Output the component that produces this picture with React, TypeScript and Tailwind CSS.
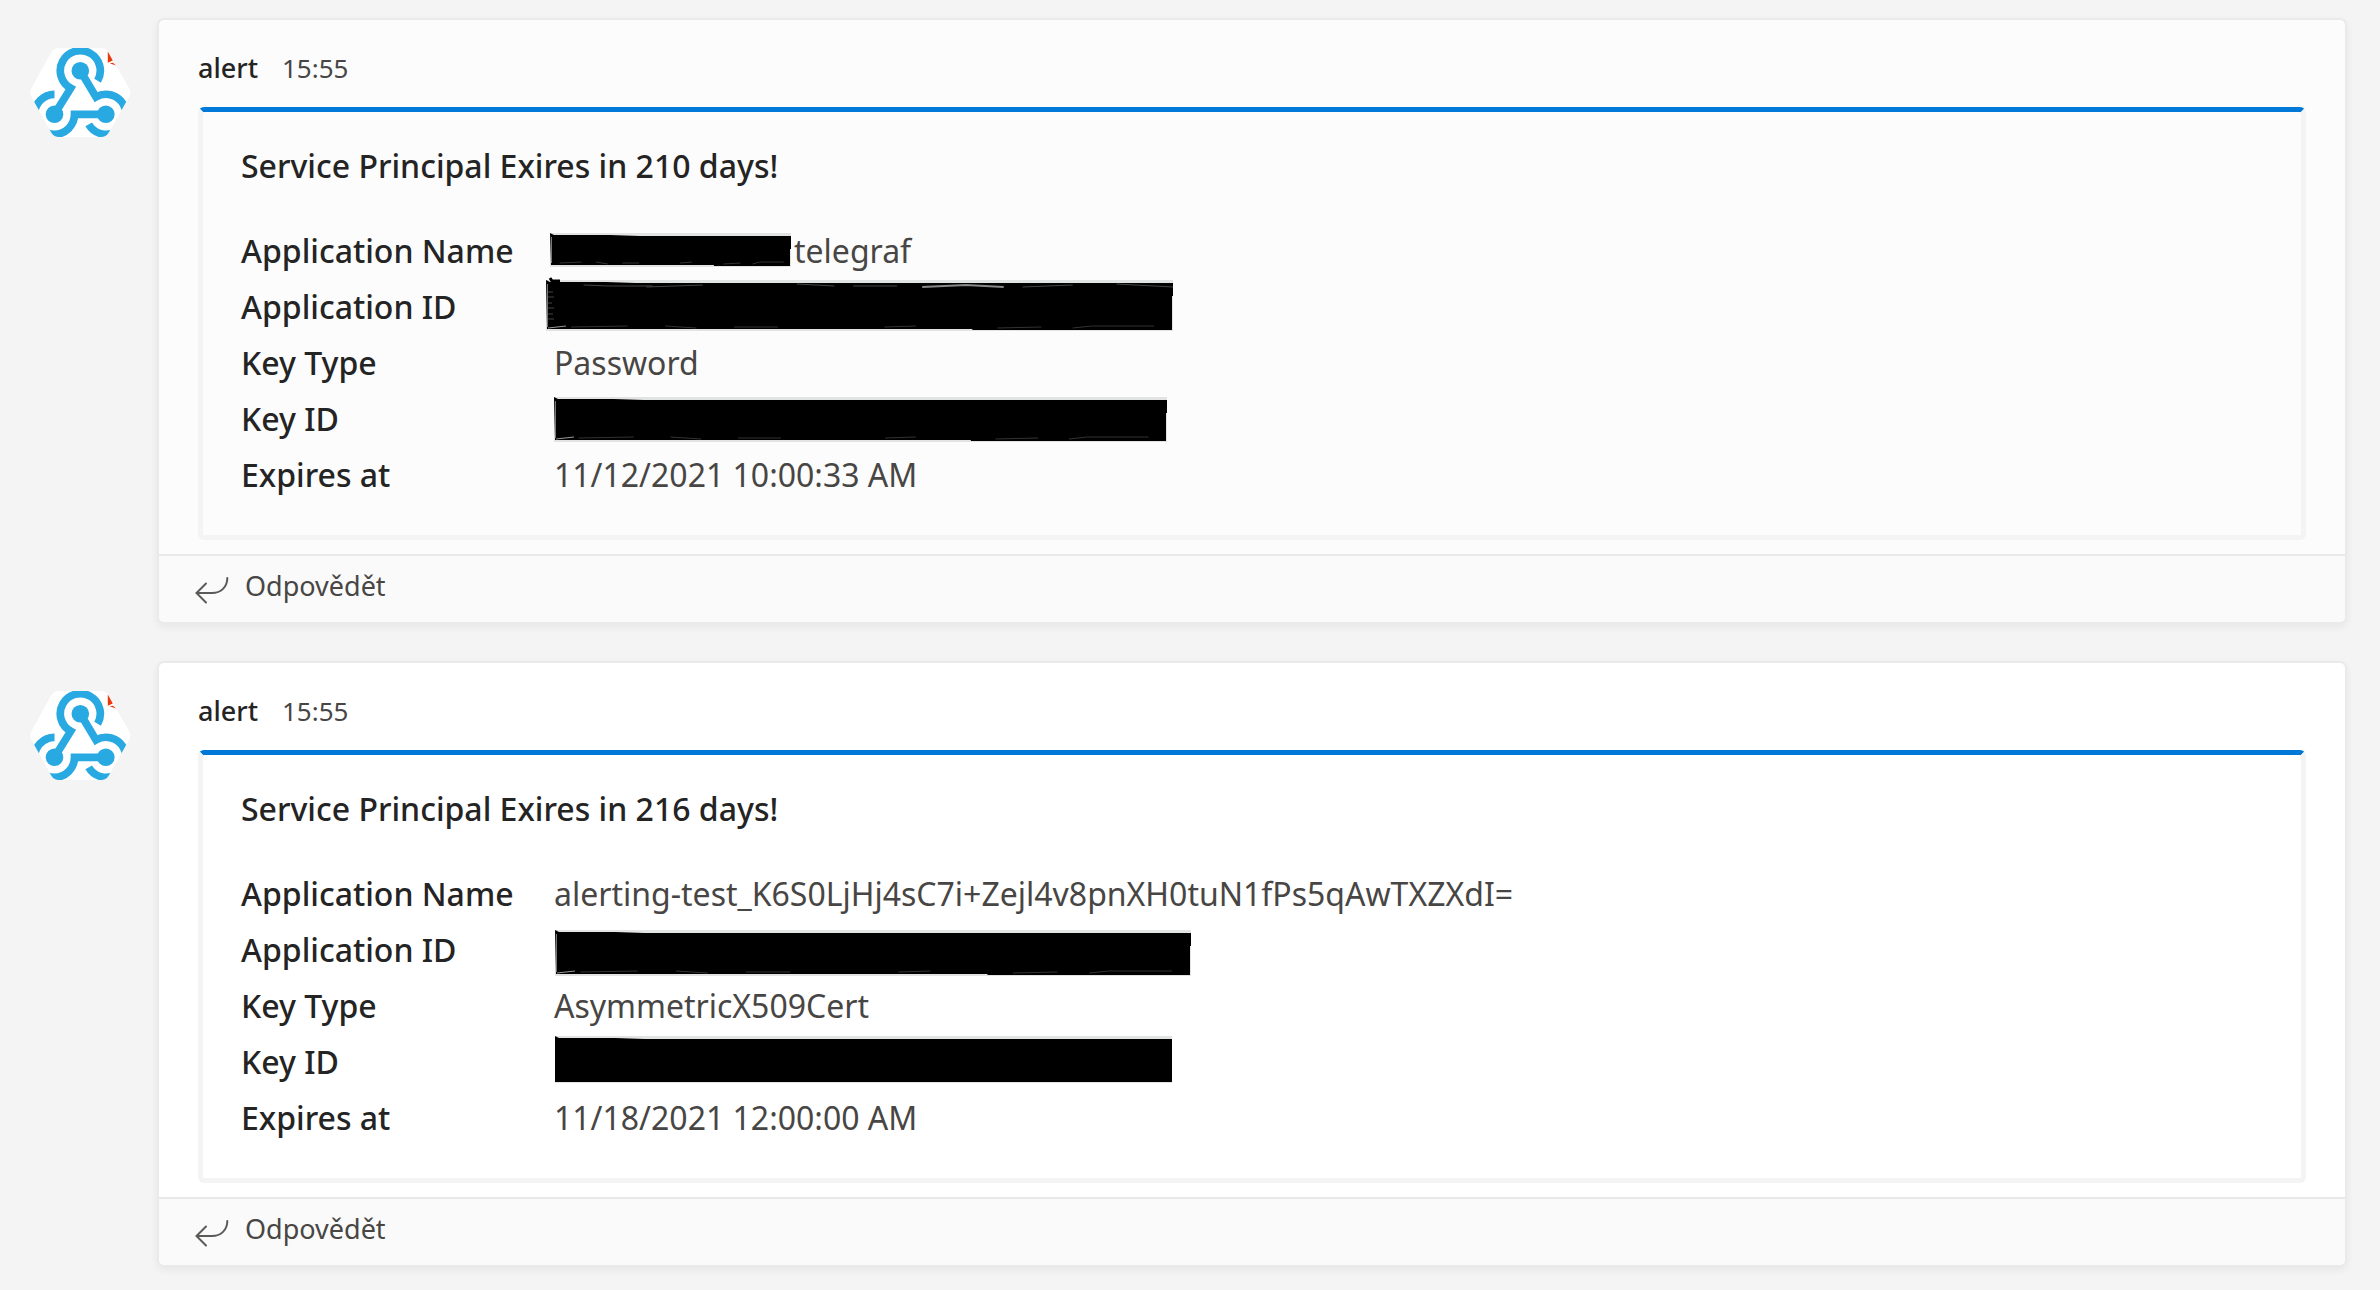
import type { ReactNode } from "react";

type Edge = "none" | "thin" | "bottom" | "frame";

type Bar = {
  x: number;
  y: number;
  w: number;
  h: number;
  edge: Edge;
};

type Fact = {
  label: string;
  value?: string;
  bar?: Bar;
};

type Alert = {
  id: string;
  title: string;
  visited: boolean;
  facts: Fact[];
};

const ALERTS: Alert[] = [
  {
    id: "a1",
    title: "Service Principal Exires in 210 days!",
    visited: true,
    facts: [
      { label: "Application Name", value: "telegraf", bar: { x: 8, y: 10, w: 241, h: 34, edge: "thin" } },
      { label: "Application ID", bar: { x: 4, y: 1, w: 627, h: 51, edge: "frame" } },
      { label: "Key Type", value: "Password" },
      { label: "Key ID", bar: { x: 12, y: 6, w: 613, h: 45, edge: "bottom" } },
      { label: "Expires at", value: "11/12/2021 10:00:33 AM" },
    ],
  },
  {
    id: "a2",
    title: "Service Principal Exires in 216 days!",
    visited: false,
    facts: [
      { label: "Application Name", value: "alerting-test_K6S0LjHj4sC7i+Zejl4v8pnXH0tuN1fPs5qAwTXZXdI=" },
      { label: "Application ID", bar: { x: 13, y: 8, w: 636, h: 46, edge: "bottom" } },
      { label: "Key Type", value: "AsymmetricX509Cert" },
      { label: "Key ID", bar: { x: 13, y: 2, w: 617, h: 47, edge: "none" } },
      { label: "Expires at", value: "11/18/2021 12:00:00 AM" },
    ],
  },
];

function WebhookLogo({ id }: { id: string }) {
  return (
    <svg className="mt-[30px] h-[90px] w-[101px] shrink-0" viewBox="0 0 101 90" role="img" aria-label="alert">
      <defs>
        <clipPath id={id}>
          <path d="M29 0H71Q76 0 78.500 4L99 40Q101.500 44.500 99 49L78.500 85Q76 89 71 89H29Q24 89 21.500 85L1.500 49Q-1 44.500 1.500 40L21.500 4Q24 0 29 0Z" />
        </clipPath>
      </defs>
      <g clipPath={`url(#${id})`}>
        <rect width="101" height="90" fill="#fff" />
        <g fill="none" stroke="#29a9e1" strokeWidth="7.7">
          <path d="M67.6 32.7A20 20 0 1 0 40.7 40.2L24.500 66.300" />
          <path d="M50.300 22.700L66 49A20 20 0 1 1 58.700 76.300" />
          <path d="M24.500 46.300A20 20 0 1 0 44.500 66.300H76" />
        </g>
        <g fill="#29a9e1">
          <circle cx="50.300" cy="22.700" r="8.800" />
          <circle cx="24.500" cy="66.300" r="8.800" />
          <circle cx="75.800" cy="66.300" r="8.800" />
        </g>
      </g>
      <path d="M77.800 3.500L82.800 12.500L77.800 14.700ZM79.500 15.200L83 14.800L86 17.600Z" fill="#e8380d" />
    </svg>
  );
}

function ReplyArrow() {
  return (
    <svg className="h-9 w-[34px]" viewBox="0 0 34 36" fill="none" stroke="#5c5a58" strokeWidth="2" strokeLinecap="round" aria-hidden="true">
      <path d="M11 15.500L1.500 25L11 34.500M1.500 25H17C26 25 32.300 19 32.300 10" />
    </svg>
  );
}

function Redaction({ x, y, w, h, edge }: Bar) {
  const r = x + w;
  const b = y + h;
  const at = (f: number) => x + w * f;
  return (
    <svg className="-ml-3 block h-14 shrink-0 overflow-visible" width={r + 3} height={56} role="img" aria-label="redacted">
      <path d={`M${x} ${y}H${r}V${b}H${x}Z`} fill="#e2e4e3" />
      {edge === "none" ? (
        <path d={`M${x} ${y}L${x + 4} ${y + 2}H${x + 60}L${x + 90} ${y + 3}H${r}V${b - 1}H${x}Z`} fill="#000" />
      ) : (
        <path
          d={`M${x} ${y}L${x + 4} ${y + 2}H${x + 60}L${x + 90} ${y + 3}H${r}V${y + 16}H${r - 1}V${b - 1}H${at(0.68)}V${b - 2}H${x + 1}Z`}
          fill="#000"
        />
      )}
      {edge !== "none" && (
        <g stroke="#333" fill="none" strokeWidth="1">
          <path d={`M${x + 1.5} ${y + 4}V${b - 4}`} stroke="#777" />
          <path
            d={`M${at(0.04)} ${b - 4}L${at(0.13)} ${b - 5}M${at(0.19)} ${b - 5}L${at(0.24)} ${b - 3}M${at(0.3)} ${b - 4}H${at(0.37)}M${at(0.54)} ${b - 4}L${at(0.59)} ${b - 5}M${at(0.72)} ${b - 3}L${at(0.79)} ${b - 4}M${at(0.84)} ${b - 3}L${at(0.87)} ${b - 5}H${at(0.97)}`}
          />
          {edge !== "thin" && <path d={`M${x + 2} ${b - 3}L${x + 20} ${b - 5}`} stroke="#999" />}
        </g>
      )}
      {edge === "frame" && (
        <g stroke="#444" fill="none" strokeWidth="1">
          <path
            d={`M${at(0.06)} ${y + 5}L${at(0.1)} ${y + 6}H${at(0.17)}M${at(0.16)} ${y + 7}L${at(0.25)} ${y + 5}M${at(0.4)} ${y + 4}L${at(0.46)} ${y + 6}M${at(0.49)} ${y + 6}H${at(0.56)}M${at(0.76)} ${y + 7}L${at(0.84)} ${y + 5}M${at(0.91)} ${y + 4}L${r} ${y + 7}`}
          />
          <path d={`M${at(0.6)} ${y + 7}L${at(0.67)} ${y + 5}L${at(0.73)} ${y + 7}`} stroke="#888" strokeWidth="2" />
          <path d={`M${x + 2} ${y + 12}h5M${x + 2} ${y + 17}h6M${x + 2} ${y + 23}h4M${x + 2} ${y + 28}h6M${x + 2} ${y + 34}h5M${x + 2} ${y + 39}h6`} />
          <path d={`M${x + 4} ${y - 2}L${x + 6} ${y + 1}H${x + 14}`} stroke="#000" strokeWidth="3" />
        </g>
      )}
    </svg>
  );
}

function FactRow({ label, children }: { label: string; children: ReactNode }) {
  return (
    <tr className="h-14">
      <th scope="row" className="w-[313px] p-0 text-left align-middle text-[32px] leading-[56px] font-medium text-[#242424]">
        {label}
      </th>
      <td className="p-0 align-middle text-[32px] leading-[56px] text-[#484644]">
        <div className="flex h-14 items-center">{children}</div>
      </td>
    </tr>
  );
}

function AlertMessage({ alert }: { alert: Alert }) {
  return (
    <li className="flex gap-[26px]">
      <WebhookLogo id={`hex-${alert.id}`} />
      <article
        className={`min-w-0 grow overflow-hidden rounded-[7px] border-2 border-[#eaeaea] shadow-[0_3px_8px_rgba(0,0,0,0.06)] ${
          alert.visited ? "bg-[#fcfcfc]" : "bg-white"
        }`}
      >
        <div className="px-[39px] pt-[30px] pb-3.5">
          <header className="mb-[21px] flex items-baseline gap-6 leading-9">
            <span className="text-[27px] font-medium text-[#242424]">alert</span>
            <time className="text-[26px] text-[#484644]">15:55</time>
          </header>
          <section className="rounded-md border-[5px] border-[#f4f4f4] border-t-[#0078d7] px-[38px] py-8">
            <h2 className="mb-[35px] text-[32px] leading-[44px] font-medium text-[#242424]">{alert.title}</h2>
            <table className="w-full border-collapse">
              <tbody>
                {alert.facts.map((f) => (
                  <FactRow key={f.label} label={f.label}>
                    {f.bar && <Redaction {...f.bar} />}
                    {f.value && <span>{f.value}</span>}
                  </FactRow>
                ))}
              </tbody>
            </table>
          </section>
        </div>
        <footer className="border-t-2 border-[#e9e9e9] bg-[#fafafa] px-9 pt-3 pb-[18px]">
          <button type="button" className="flex h-9 items-center gap-4 text-[27px] leading-9 text-[#484644]">
            <ReplyArrow />
            Odpovědět
          </button>
        </footer>
      </article>
    </li>
  );
}

export default function App() {
  return (
    <main className="min-h-screen bg-[#f4f4f4] pt-[18px] pr-[33px] pl-[30px] font-['Noto_Sans','Open_Sans',sans-serif]">
      <ul className="flex flex-col gap-[37px]">
        {ALERTS.map((a) => (
          <AlertMessage key={a.id} alert={a} />
        ))}
      </ul>
    </main>
  );
}
